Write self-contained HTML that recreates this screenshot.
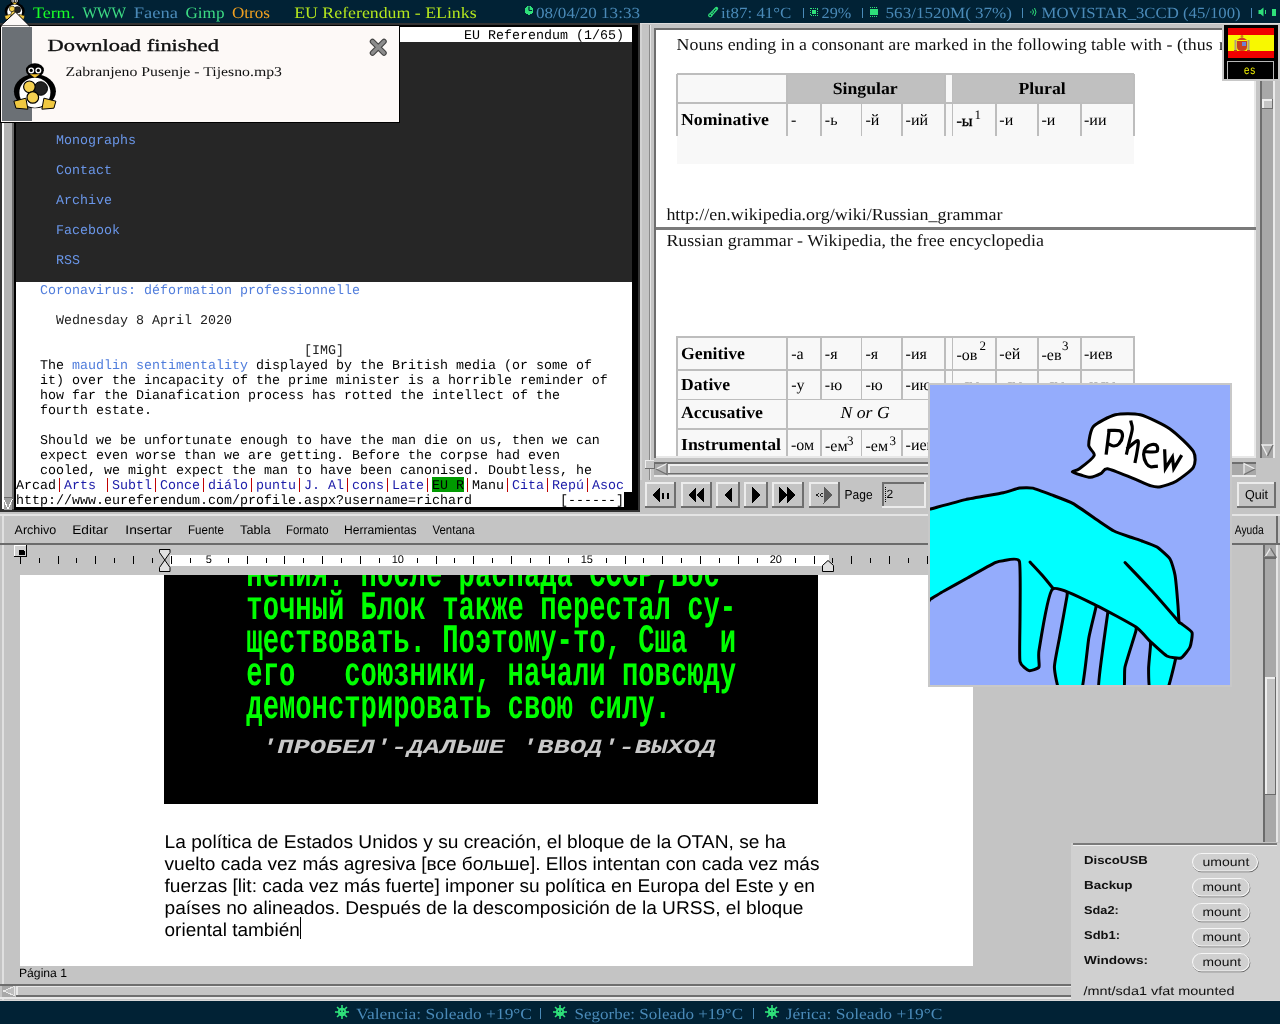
<!DOCTYPE html>
<html><head><meta charset="utf-8"><title>Desktop</title>
<style>
html,body{margin:0;padding:0;width:1280px;height:1024px;overflow:hidden;background:#c4c4c4;}
svg{position:absolute;left:0;top:0;display:block;will-change:transform;}
text{white-space:pre;}
</style></head><body>
<svg width="1280" height="1024" viewBox="0 0 1280 1024" shape-rendering="crispEdges" text-rendering="geometricPrecision">
<rect x="0" y="0" width="1280" height="1024" fill="#c4c4c4" />
<rect x="0" y="510" width="1280" height="490" fill="#c4c4c4" />
<rect x="2" y="514" width="2" height="486" fill="#e0e0e0" />
<rect x="0" y="543" width="1280" height="1.5" fill="#6b6b6b" />
<text x="14.6" y="534" font-family="Liberation Sans" font-size="12.5" fill="#000" textLength="41.7" lengthAdjust="spacingAndGlyphs" >Archivo</text>
<text x="72.2" y="534" font-family="Liberation Sans" font-size="12.5" fill="#000" textLength="35.8" lengthAdjust="spacingAndGlyphs" >Editar</text>
<text x="125.3" y="534" font-family="Liberation Sans" font-size="12.5" fill="#000" textLength="46.8" lengthAdjust="spacingAndGlyphs" >Insertar</text>
<text x="188" y="534" font-family="Liberation Sans" font-size="12.5" fill="#000" textLength="36" lengthAdjust="spacingAndGlyphs" >Fuente</text>
<text x="240" y="534" font-family="Liberation Sans" font-size="12.5" fill="#000" textLength="30.5" lengthAdjust="spacingAndGlyphs" >Tabla</text>
<text x="286" y="534" font-family="Liberation Sans" font-size="12.5" fill="#000" textLength="42.5" lengthAdjust="spacingAndGlyphs" >Formato</text>
<text x="344" y="534" font-family="Liberation Sans" font-size="12.5" fill="#000" textLength="72.5" lengthAdjust="spacingAndGlyphs" >Herramientas</text>
<text x="432.5" y="534" font-family="Liberation Sans" font-size="12.5" fill="#000" textLength="42.0" lengthAdjust="spacingAndGlyphs" >Ventana</text>
<rect x="1232" y="514" width="46" height="31" fill="#c4c4c4" />
<rect x="1232" y="514" width="46" height="1.6" fill="#e6e6e6" />
<rect x="1276" y="514" width="2" height="31" fill="#6b6b6b" />
<rect x="1232" y="543" width="46" height="2" fill="#6b6b6b" />
<text x="1234.8" y="534" font-family="Liberation Sans" font-size="12.5" fill="#000" textLength="29" lengthAdjust="spacingAndGlyphs" >Ayuda</text>
<rect x="1263" y="545" width="2" height="297" fill="#6b6b6b" />
<rect x="1265" y="545" width="11" height="297" fill="#a8a8a8" />
<rect x="1276" y="545" width="2" height="297" fill="#e6e6e6" />
<g shape-rendering="auto"><polygon points="1270.5,548 1265,557 1276,557" fill="#b4b4b4"/><path d="M1265,557 L1270.5,548" stroke="#eeeeee" stroke-width="1.3"/><path d="M1270.5,548 L1276,557 L1265,557" stroke="#6e6e6e" stroke-width="1.3" fill="none"/></g>
<rect x="1265" y="557" width="11" height="1.5" fill="#6b6b6b" />
<rect x="1265" y="677" width="11" height="118" fill="#c4c4c4" />
<rect x="1265" y="677" width="11" height="1.5" fill="#eeeeee" />
<rect x="1265" y="677" width="1.5" height="118" fill="#eeeeee" />
<rect x="1265" y="793.5" width="11" height="1.5" fill="#6b6b6b" />
<rect x="1274.5" y="677" width="1.5" height="118" fill="#6b6b6b" />
<rect x="170" y="555" width="659" height="11" fill="#ffffff" />
<rect x="19.5" y="556.3" width="1.2" height="7.4" fill="#000" />
<rect x="38.5" y="557.5" width="1.2" height="5" fill="#000" />
<rect x="57.5" y="556.3" width="1.2" height="7.4" fill="#000" />
<rect x="75.5" y="557.5" width="1.2" height="5" fill="#000" />
<rect x="94.5" y="556.3" width="1.2" height="7.4" fill="#000" />
<rect x="113.5" y="557.5" width="1.2" height="5" fill="#000" />
<rect x="132.5" y="556.3" width="1.2" height="7.4" fill="#000" />
<rect x="151.5" y="557.5" width="1.2" height="5" fill="#000" />
<rect x="170.5" y="556.3" width="1.2" height="7.4" fill="#000" />
<rect x="189.5" y="557.5" width="1.2" height="5" fill="#000" />
<text x="208.8" y="562.6" font-family="Liberation Sans" font-size="11" fill="#000" text-anchor="middle" >5</text>
<rect x="227.5" y="557.5" width="1.2" height="5" fill="#000" />
<rect x="246.5" y="556.3" width="1.2" height="7.4" fill="#000" />
<rect x="265.5" y="557.5" width="1.2" height="5" fill="#000" />
<rect x="283.5" y="556.3" width="1.2" height="7.4" fill="#000" />
<rect x="302.5" y="557.5" width="1.2" height="5" fill="#000" />
<rect x="321.5" y="556.3" width="1.2" height="7.4" fill="#000" />
<rect x="340.5" y="557.5" width="1.2" height="5" fill="#000" />
<rect x="359.5" y="556.3" width="1.2" height="7.4" fill="#000" />
<rect x="378.5" y="557.5" width="1.2" height="5" fill="#000" />
<text x="397.8" y="562.6" font-family="Liberation Sans" font-size="11" fill="#000" text-anchor="middle" >10</text>
<rect x="416.5" y="557.5" width="1.2" height="5" fill="#000" />
<rect x="435.5" y="556.3" width="1.2" height="7.4" fill="#000" />
<rect x="453.5" y="557.5" width="1.2" height="5" fill="#000" />
<rect x="472.5" y="556.3" width="1.2" height="7.4" fill="#000" />
<rect x="491.5" y="557.5" width="1.2" height="5" fill="#000" />
<rect x="510.5" y="556.3" width="1.2" height="7.4" fill="#000" />
<rect x="529.5" y="557.5" width="1.2" height="5" fill="#000" />
<rect x="548.5" y="556.3" width="1.2" height="7.4" fill="#000" />
<rect x="567.5" y="557.5" width="1.2" height="5" fill="#000" />
<text x="586.8" y="562.6" font-family="Liberation Sans" font-size="11" fill="#000" text-anchor="middle" >15</text>
<rect x="605.5" y="557.5" width="1.2" height="5" fill="#000" />
<rect x="624.5" y="556.3" width="1.2" height="7.4" fill="#000" />
<rect x="642.5" y="557.5" width="1.2" height="5" fill="#000" />
<rect x="661.5" y="556.3" width="1.2" height="7.4" fill="#000" />
<rect x="680.5" y="557.5" width="1.2" height="5" fill="#000" />
<rect x="699.5" y="556.3" width="1.2" height="7.4" fill="#000" />
<rect x="718.5" y="557.5" width="1.2" height="5" fill="#000" />
<rect x="737.5" y="556.3" width="1.2" height="7.4" fill="#000" />
<rect x="756.5" y="557.5" width="1.2" height="5" fill="#000" />
<text x="775.8" y="562.6" font-family="Liberation Sans" font-size="11" fill="#000" text-anchor="middle" >20</text>
<rect x="794.5" y="557.5" width="1.2" height="5" fill="#000" />
<rect x="813.5" y="556.3" width="1.2" height="7.4" fill="#000" />
<rect x="831.5" y="557.5" width="1.2" height="5" fill="#000" />
<rect x="850.5" y="556.3" width="1.2" height="7.4" fill="#000" />
<rect x="869.5" y="557.5" width="1.2" height="5" fill="#000" />
<rect x="888.5" y="556.3" width="1.2" height="7.4" fill="#000" />
<rect x="907.5" y="557.5" width="1.2" height="5" fill="#000" />
<rect x="926.5" y="556.3" width="1.2" height="7.4" fill="#000" />
<rect x="14.3" y="545.2" width="12.3" height="11.5" fill="#d0d0d0" />
<rect x="14.3" y="545.2" width="12.3" height="1" fill="#ffffff" />
<rect x="14.3" y="545.2" width="1" height="11.5" fill="#ffffff" />
<rect x="14.3" y="555.7" width="12.3" height="1" fill="#000" />
<rect x="25.6" y="545.2" width="1" height="11.5" fill="#000" />
<rect x="18.5" y="549.5" width="5" height="5" fill="#000" />
<rect x="22" y="551" width="2.5" height="3.5" fill="#000" />
<path d="M159.5,549.5 h10.5 v3 l-5.25,7.5 l5.25,7.5 v4 h-10.5 v-4 l5.25,-7.5 l-5.25,-7.5 z" fill="#e0e0e0" stroke="#000" stroke-width="1" shape-rendering="auto"/>
<path d="M822.5,571.5 v-6 l5.5,-5 l5.5,5 v6 z" fill="#e0e0e0" stroke="#000" stroke-width="1" shape-rendering="auto"/>
<rect x="20" y="575" width="953" height="391" fill="#ffffff" />
<rect x="164" y="575" width="654" height="229" fill="#000000" />
<svg x="164" y="575" width="654" height="229" overflow="hidden">
<text transform="translate(82.3,11.0) scale(1,1.62)" font-family="Liberation Mono" font-weight="bold" font-size="25" fill="#00ff00" textLength="473.6" lengthAdjust="spacingAndGlyphs">нения. после распада СССР,Вос</text>
<text transform="translate(82.3,44.1) scale(1,1.62)" font-family="Liberation Mono" font-weight="bold" font-size="25" fill="#00ff00" textLength="489.9" lengthAdjust="spacingAndGlyphs">точный Блок также перестал су-</text>
<text transform="translate(82.3,77.2) scale(1,1.62)" font-family="Liberation Mono" font-weight="bold" font-size="25" fill="#00ff00" textLength="489.9" lengthAdjust="spacingAndGlyphs">ществовать. Поэтому-то, Сша  и</text>
<text transform="translate(82.3,110.30000000000001) scale(1,1.62)" font-family="Liberation Mono" font-weight="bold" font-size="25" fill="#00ff00" textLength="489.9" lengthAdjust="spacingAndGlyphs">его   союзники, начали повсюду</text>
<text transform="translate(82.3,143.4) scale(1,1.62)" font-family="Liberation Mono" font-weight="bold" font-size="25" fill="#00ff00" textLength="424.6" lengthAdjust="spacingAndGlyphs">демонстрировать свою силу.</text>
<text transform="translate(97,178.3)" font-family="Liberation Mono" font-weight="bold" font-style="italic" font-size="20" fill="#c8c8c8" textLength="455" lengthAdjust="spacingAndGlyphs">&#x27;ПРОБЕЛ&#x27;-ДАЛЬШЕ &#x27;ВВОД&#x27;-ВЫХОД</text>
</svg>
<text x="164.5" y="847.9" font-family="Liberation Sans" font-size="18.5" fill="#000" textLength="621.5" lengthAdjust="spacingAndGlyphs" >La política de Estados Unidos y su creación, el bloque de la OTAN, se ha</text>
<text x="164.5" y="869.9" font-family="Liberation Sans" font-size="18.5" fill="#000" textLength="655.0" lengthAdjust="spacingAndGlyphs" >vuelto cada vez más agresiva [все больше]. Ellos intentan con cada vez más</text>
<text x="164.5" y="891.9" font-family="Liberation Sans" font-size="18.5" fill="#000" textLength="650.5" lengthAdjust="spacingAndGlyphs" >fuerzas [lit: cada vez más fuerte] imponer su política en Europa del Este y en</text>
<text x="164.5" y="913.9" font-family="Liberation Sans" font-size="18.5" fill="#000" textLength="639.0" lengthAdjust="spacingAndGlyphs" >países no alineados. Después de la descomposición de la URSS, el bloque</text>
<text x="164.5" y="935.9" font-family="Liberation Sans" font-size="18.5" fill="#000" textLength="135.3" lengthAdjust="spacingAndGlyphs" >oriental también</text>
<rect x="300" y="917" width="1" height="22" fill="#000" />
<text x="19" y="977" font-family="Liberation Sans" font-size="12" fill="#000" textLength="48" lengthAdjust="spacingAndGlyphs" >Página 1</text>
<rect x="0" y="984" width="1071" height="1.6" fill="#6e6e6e" />
<rect x="2" y="985.6" width="13" height="11.4" fill="#a8a8a8" />
<polygon points="3.5,991 14,986.5 14,995.5" fill="#bdbdbd" stroke="#e8e8e8" stroke-width="1"/>
<rect x="16" y="985.6" width="1075" height="11.4" fill="#c4c4c4" />
<rect x="16" y="985.6" width="1075" height="1.6" fill="#e8e8e8" />
<rect x="16" y="985.6" width="1.6" height="11.4" fill="#e8e8e8" />
<rect x="16" y="995.4" width="1075" height="1.6" fill="#6e6e6e" />
<rect x="1089.4" y="985.6" width="1.6" height="11.4" fill="#6e6e6e" />
<rect x="0" y="997" width="1071" height="2" fill="#e8e8e8" />
<rect x="0" y="23" width="640" height="489" fill="#333333" />
<rect x="2" y="26" width="2" height="483" fill="#ffffff" />
<rect x="4" y="26" width="8" height="483" fill="#b4b4b4" />
<rect x="12" y="26" width="2" height="483" fill="#6b6b6b" />
<rect x="4" y="496.5" width="8" height="1" fill="#6b6b6b" />
<rect x="4" y="497.5" width="8" height="12" fill="#a0a0a0" />
<polyline points="3.5,499 8,509 12.5,499" fill="none" stroke="#ffffff" stroke-width="1"/>
<rect x="14" y="25" width="624" height="485" fill="#000000" />
<rect x="16" y="27" width="616" height="480" fill="#262626" />
<rect x="16" y="27" width="616" height="15" fill="#ffffff" />
<rect x="16" y="282" width="616" height="225" fill="#ffffff" />
<text x="464" y="39" font-family="Liberation Mono" font-size="13.333" fill="#000" >EU Referendum (1/65)</text>
<text x="56" y="144" font-family="Liberation Mono" font-size="13.333" fill="#6a96e8" >Monographs</text>
<text x="56" y="174" font-family="Liberation Mono" font-size="13.333" fill="#6a96e8" >Contact</text>
<text x="56" y="204" font-family="Liberation Mono" font-size="13.333" fill="#6a96e8" >Archive</text>
<text x="56" y="234" font-family="Liberation Mono" font-size="13.333" fill="#6a96e8" >Facebook</text>
<text x="56" y="264" font-family="Liberation Mono" font-size="13.333" fill="#6a96e8" >RSS</text>
<text x="40" y="294" font-family="Liberation Mono" font-size="13.333" fill="#507ddc" >Coronavirus: déformation professionnelle</text>
<text x="56" y="324" font-family="Liberation Mono" font-size="13.333" fill="#202020" >Wednesday 8 April 2020</text>
<text x="304" y="354" font-family="Liberation Mono" font-size="13.333" fill="#202020" >[IMG]</text>
<text x="40" y="369" font-family="Liberation Mono" font-size="13.333" fill="#000" >The</text>
<text x="72" y="369" font-family="Liberation Mono" font-size="13.333" fill="#507ddc" >maudlin sentimentality</text>
<text x="256" y="369" font-family="Liberation Mono" font-size="13.333" fill="#000" >displayed by the British media (or some of</text>
<text x="40" y="384" font-family="Liberation Mono" font-size="13.333" fill="#000" >it) over the incapacity of the prime minister is a horrible reminder of</text>
<text x="40" y="399" font-family="Liberation Mono" font-size="13.333" fill="#000" >how far the Dianafication process has rotted the intellect of the</text>
<text x="40" y="414" font-family="Liberation Mono" font-size="13.333" fill="#000" >fourth estate.</text>
<text x="40" y="444" font-family="Liberation Mono" font-size="13.333" fill="#000" >Should we be unfortunate enough to have the man die on us, then we can</text>
<text x="40" y="459" font-family="Liberation Mono" font-size="13.333" fill="#000" >expect even worse than we are getting. Before the corpse had even</text>
<text x="40" y="474" font-family="Liberation Mono" font-size="13.333" fill="#000" >cooled, we might expect the man to have been canonised. Doubtless, he</text>
<text x="16" y="489" font-family="Liberation Mono" font-size="13.333" fill="#000" >Arcad</text>
<rect x="58.5" y="477.5" width="1.8" height="14.5" fill="#c00000" />
<text x="64" y="489" font-family="Liberation Mono" font-size="13.333" fill="#1a1aa8" >Arts </text>
<rect x="106.5" y="477.5" width="1.8" height="14.5" fill="#c00000" />
<text x="112" y="489" font-family="Liberation Mono" font-size="13.333" fill="#1a1aa8" >Subtl</text>
<rect x="154.5" y="477.5" width="1.8" height="14.5" fill="#c00000" />
<text x="160" y="489" font-family="Liberation Mono" font-size="13.333" fill="#1a1aa8" >Conce</text>
<rect x="202.5" y="477.5" width="1.8" height="14.5" fill="#c00000" />
<text x="208" y="489" font-family="Liberation Mono" font-size="13.333" fill="#1a1aa8" >diálo</text>
<rect x="250.5" y="477.5" width="1.8" height="14.5" fill="#c00000" />
<text x="256" y="489" font-family="Liberation Mono" font-size="13.333" fill="#1a1aa8" >puntu</text>
<rect x="298.5" y="477.5" width="1.8" height="14.5" fill="#c00000" />
<text x="304" y="489" font-family="Liberation Mono" font-size="13.333" fill="#1a1aa8" >J. Al</text>
<rect x="346.5" y="477.5" width="1.8" height="14.5" fill="#c00000" />
<text x="352" y="489" font-family="Liberation Mono" font-size="13.333" fill="#1a1aa8" >cons</text>
<rect x="386.5" y="477.5" width="1.8" height="14.5" fill="#c00000" />
<text x="392" y="489" font-family="Liberation Mono" font-size="13.333" fill="#1a1aa8" >Late</text>
<rect x="426.5" y="477.5" width="1.8" height="14.5" fill="#c00000" />
<rect x="432" y="477" width="32" height="15" fill="#009a00" />
<text x="432" y="489" font-family="Liberation Mono" font-size="13.333" fill="#000" >EU R</text>
<rect x="466.5" y="477.5" width="1.8" height="14.5" fill="#c00000" />
<text x="472" y="489" font-family="Liberation Mono" font-size="13.333" fill="#000" >Manu</text>
<rect x="506.5" y="477.5" width="1.8" height="14.5" fill="#c00000" />
<text x="512" y="489" font-family="Liberation Mono" font-size="13.333" fill="#1a1aa8" >Cita</text>
<rect x="546.5" y="477.5" width="1.8" height="14.5" fill="#c00000" />
<text x="552" y="489" font-family="Liberation Mono" font-size="13.333" fill="#1a1aa8" >Repú</text>
<rect x="586.5" y="477.5" width="1.8" height="14.5" fill="#c00000" />
<text x="592" y="489" font-family="Liberation Mono" font-size="13.333" fill="#1a1aa8" >Asoc</text>
<rect x="624" y="492" width="8" height="15" fill="#000" />
<text x="16" y="504" font-family="Liberation Mono" font-size="13.333" fill="#000" >http://www.eureferendum.com/profile.aspx?username=richard</text>
<text x="560" y="504" font-family="Liberation Mono" font-size="13.333" fill="#000" >[------]</text>
<rect x="640" y="23" width="640" height="489" fill="#c4c4c4" />
<rect x="640" y="23" width="640" height="1" fill="#dcdcdc" />
<rect x="640" y="24" width="2" height="456" fill="#d2d2d2" />
<rect x="649" y="25" width="1" height="455" fill="#8a8a8a" />
<rect x="650" y="25" width="1" height="455" fill="#e6e6e6" />
<rect x="654" y="28" width="602" height="430" fill="#6e6e6e" />
<rect x="656" y="30" width="600" height="426" fill="#ffffff" />
<rect x="656" y="456" width="600" height="1.5" fill="#e8e8e8" />
<rect x="1254" y="30" width="2" height="427" fill="#e8e8e8" />
<rect x="1260" y="30" width="2" height="428" fill="#6e6e6e" />
<rect x="1262" y="30" width="11" height="428" fill="#a8a8a8" />
<rect x="1273" y="30" width="2" height="428" fill="#eaeaea" />
<rect x="1262" y="99" width="11" height="10" fill="#c4c4c4" />
<rect x="1262" y="99" width="11" height="1.5" fill="#eeeeee" />
<rect x="1262" y="99" width="1.5" height="10" fill="#eeeeee" />
<rect x="1262" y="107.5" width="11" height="1.5" fill="#6e6e6e" />
<rect x="1271.5" y="99" width="1.5" height="10" fill="#6e6e6e" />
<g shape-rendering="auto"><polygon points="1262,445 1273,445 1267.5,456" fill="#b4b4b4"/><path d="M1267.5,456 L1262,445 L1273,445" stroke="#eeeeee" stroke-width="1.3" fill="none"/><path d="M1273,445 L1267.5,456" stroke="#6e6e6e" stroke-width="1.3"/></g>
<rect x="654" y="462" width="602" height="1.5" fill="#6e6e6e" />
<rect x="654" y="463.5" width="602" height="11" fill="#a8a8a8" />
<rect x="654" y="474.5" width="602" height="2" fill="#eaeaea" />
<rect x="645" y="460" width="10" height="9" fill="#c4c4c4" />
<rect x="645" y="460" width="10" height="1.2" fill="#eeeeee" />
<rect x="645" y="460" width="1.2" height="9" fill="#eeeeee" />
<rect x="645" y="467.8" width="10" height="1.2" fill="#6e6e6e" />
<rect x="653.8" y="460" width="1.2" height="9" fill="#6e6e6e" />
<g shape-rendering="auto"><polygon points="656,469 667,463.5 667,474.5" fill="#b4b4b4"/><path d="M656,469 L667,463.5" stroke="#eeeeee" stroke-width="1.3"/><path d="M656,469 L667,474.5 L667,463.5" stroke="#6e6e6e" stroke-width="1.3" fill="none"/></g>
<rect x="668" y="464" width="560" height="10" fill="#c4c4c4" />
<rect x="668" y="464" width="560" height="1.5" fill="#eeeeee" />
<rect x="668" y="464" width="1.5" height="10" fill="#eeeeee" />
<rect x="668" y="472.5" width="560" height="1.5" fill="#6e6e6e" />
<rect x="1226.5" y="464" width="1.5" height="10" fill="#6e6e6e" />
<g shape-rendering="auto"><polygon points="1255,469 1244,463.5 1244,474.5" fill="#b4b4b4"/><path d="M1244,474.5 L1244,463.5 L1255,469" stroke="#eeeeee" stroke-width="1.3" fill="none"/><path d="M1255,469 L1244,474.5" stroke="#6e6e6e" stroke-width="1.3"/></g>
<rect x="644.5" y="482" width="31.5" height="26" fill="#c4c4c4" />
<rect x="644.5" y="482" width="31.5" height="2" fill="#ececec" />
<rect x="644.5" y="482" width="2" height="26" fill="#ececec" />
<rect x="644.5" y="506" width="31.5" height="2" fill="#6e6e6e" />
<rect x="674.0" y="482" width="2" height="26" fill="#6e6e6e" />
<rect x="680.5" y="482" width="31.0" height="26" fill="#c4c4c4" />
<rect x="680.5" y="482" width="31.0" height="2" fill="#ececec" />
<rect x="680.5" y="482" width="2" height="26" fill="#ececec" />
<rect x="680.5" y="506" width="31.0" height="2" fill="#6e6e6e" />
<rect x="709.5" y="482" width="2" height="26" fill="#6e6e6e" />
<rect x="716" y="482" width="24" height="26" fill="#c4c4c4" />
<rect x="716" y="482" width="24" height="2" fill="#ececec" />
<rect x="716" y="482" width="2" height="26" fill="#ececec" />
<rect x="716" y="506" width="24" height="2" fill="#6e6e6e" />
<rect x="738" y="482" width="2" height="26" fill="#6e6e6e" />
<rect x="744" y="482" width="24" height="26" fill="#c4c4c4" />
<rect x="744" y="482" width="24" height="2" fill="#ececec" />
<rect x="744" y="482" width="2" height="26" fill="#ececec" />
<rect x="744" y="506" width="24" height="2" fill="#6e6e6e" />
<rect x="766" y="482" width="2" height="26" fill="#6e6e6e" />
<rect x="772" y="482" width="31.5" height="26" fill="#c4c4c4" />
<rect x="772" y="482" width="31.5" height="2" fill="#ececec" />
<rect x="772" y="482" width="2" height="26" fill="#ececec" />
<rect x="772" y="506" width="31.5" height="2" fill="#6e6e6e" />
<rect x="801.5" y="482" width="2" height="26" fill="#6e6e6e" />
<rect x="808.5" y="482" width="31.5" height="26" fill="#c4c4c4" />
<rect x="808.5" y="482" width="31.5" height="2" fill="#ececec" />
<rect x="808.5" y="482" width="2" height="26" fill="#ececec" />
<rect x="808.5" y="506" width="31.5" height="2" fill="#6e6e6e" />
<rect x="838.0" y="482" width="2" height="26" fill="#6e6e6e" />
<polygon points="652,495 660,487 660,503" fill="#000"/>
<rect x="662" y="492.5" width="2.2" height="6" fill="#000" />
<rect x="666.5" y="492.5" width="2.2" height="6" fill="#000" />
<polygon points="688,495 696,487 696,503" fill="#000"/><polygon points="696,495 704,487 704,503" fill="#000"/>
<polygon points="724,495 732,487 732,503" fill="#000"/>
<polygon points="760,495 752,487 752,503" fill="#000"/>
<polygon points="787,495 779,487 779,503" fill="#000"/><polygon points="795,495 787,487 787,503" fill="#000"/>
<polygon points="832.5,495 823.5,486.5 823.5,503.5" fill="#5a5a5a"/>
<g fill="#222"><rect x="816" y="494" width="1.5" height="1.5"/><rect x="817.5" y="492.5" width="1.5" height="1.5"/><rect x="817.5" y="495.5" width="1.5" height="1.5"/><rect x="819.5" y="494" width="1.5" height="1.5"/><rect x="821" y="492.5" width="1.5" height="1.5"/><rect x="821" y="495.5" width="1.5" height="1.5"/></g>
<text x="844.6" y="499" font-family="Liberation Sans" font-size="13" fill="#000" textLength="28" lengthAdjust="spacingAndGlyphs" >Page</text>
<rect x="881.5" y="482" width="44.5" height="26" fill="#c4c4c4" />
<rect x="881.5" y="482" width="44.5" height="2" fill="#6e6e6e" />
<rect x="881.5" y="482" width="2" height="26" fill="#6e6e6e" />
<rect x="881.5" y="506" width="44.5" height="2" fill="#ececec" />
<rect x="924.0" y="482" width="2" height="26" fill="#ececec" />
<text x="886.5" y="497.5" font-family="Liberation Sans" font-size="12" fill="#000" >2</text>
<line x1="885" y1="487" x2="885" y2="503" stroke="#000" stroke-width="1" stroke-dasharray="1,1"/>
<rect x="1237" y="482" width="39" height="26" fill="#c4c4c4" />
<rect x="1237" y="482" width="39" height="2" fill="#ececec" />
<rect x="1237" y="482" width="2" height="26" fill="#ececec" />
<rect x="1237" y="506" width="39" height="2" fill="#6e6e6e" />
<rect x="1274" y="482" width="2" height="26" fill="#6e6e6e" />
<text x="1245" y="499" font-family="Liberation Sans" font-size="13" fill="#000" textLength="23" lengthAdjust="spacingAndGlyphs" >Quit</text>
<rect x="0" y="514" width="1280" height="2" fill="#e4e4e4" />
<text x="676.6" y="49.8" font-family="Liberation Serif" font-size="17" fill="#111" textLength="536" lengthAdjust="spacingAndGlyphs" >Nouns ending in a consonant are marked in the following table with - (thus</text>
<text x="1219" y="49.8" font-family="Liberation Serif" font-size="17" fill="#111" >no</text>
<text x="666.4" y="220" font-family="Liberation Serif" font-size="17" fill="#111" textLength="336" lengthAdjust="spacingAndGlyphs" >http://en.wikipedia.org/wiki/Russian_grammar</text>
<rect x="656" y="227" width="600" height="3" fill="#7a7a7a" />
<text x="666.4" y="245.8" font-family="Liberation Serif" font-size="17" fill="#111" textLength="377.6" lengthAdjust="spacingAndGlyphs" >Russian grammar - Wikipedia, the free encyclopedia</text>
<rect x="676.5" y="73.5" width="457" height="90" fill="#f8f8f8" />
<rect x="786.5" y="73.2" width="158" height="30" fill="#c0c0c0" />
<rect x="952" y="73.2" width="181.5" height="30" fill="#c0c0c0" />
<rect x="676.5" y="73.1" width="457.5" height="1.7" fill="#bdbdbd" />
<rect x="676.5" y="102.1" width="457.5" height="1.7" fill="#bdbdbd" />
<rect x="676.0" y="73.5" width="1.7" height="29.5" fill="#bdbdbd" />
<rect x="786.0" y="73.5" width="1.7" height="29.5" fill="#bdbdbd" />
<rect x="944.0" y="73.5" width="1.7" height="29.5" fill="#bdbdbd" />
<rect x="951.5" y="73.5" width="1.7" height="29.5" fill="#bdbdbd" />
<rect x="1133.0" y="73.5" width="1.7" height="29.5" fill="#bdbdbd" />
<rect x="676.0" y="103" width="1.7" height="33" fill="#bdbdbd" />
<rect x="786.0" y="103" width="1.7" height="33" fill="#bdbdbd" />
<rect x="820.0" y="103" width="1.7" height="33" fill="#bdbdbd" />
<rect x="860.5" y="103" width="1.7" height="33" fill="#bdbdbd" />
<rect x="901.0" y="103" width="1.7" height="33" fill="#bdbdbd" />
<rect x="944.0" y="103" width="1.7" height="33" fill="#bdbdbd" />
<rect x="951.5" y="103" width="1.7" height="33" fill="#bdbdbd" />
<rect x="995.0" y="103" width="1.7" height="33" fill="#bdbdbd" />
<rect x="1037.0" y="103" width="1.7" height="33" fill="#bdbdbd" />
<rect x="1080.0" y="103" width="1.7" height="33" fill="#bdbdbd" />
<rect x="1133.0" y="103" width="1.7" height="33" fill="#bdbdbd" />
<text x="681" y="124.9" font-family="Liberation Serif" font-size="17" fill="#000" textLength="88" lengthAdjust="spacingAndGlyphs" font-weight="bold" >Nominative</text>
<text x="832.7" y="94.4" font-family="Liberation Serif" font-size="17" fill="#000" textLength="65" lengthAdjust="spacingAndGlyphs" font-weight="bold" >Singular</text>
<text x="1018.5" y="94.4" font-family="Liberation Serif" font-size="17" fill="#000" textLength="47.3" lengthAdjust="spacingAndGlyphs" font-weight="bold" >Plural</text>
<text x="791" y="125" font-family="Liberation Serif" font-size="16" fill="#000" >-</text>
<text x="824.8" y="125" font-family="Liberation Serif" font-size="16" fill="#000" >-ь</text>
<text x="865.5" y="125" font-family="Liberation Serif" font-size="16" fill="#000" >-й</text>
<text x="905.6" y="125" font-family="Liberation Serif" font-size="16" fill="#000" >-ий</text>
<text x="999.3" y="125" font-family="Liberation Serif" font-size="16" fill="#000" >-и</text>
<text x="1041.5" y="125" font-family="Liberation Serif" font-size="16" fill="#000" >-и</text>
<text x="1084" y="125" font-family="Liberation Serif" font-size="16" fill="#000" >-ии</text>
<text x="956.4" y="125.5" font-family="Liberation Serif" font-size="16" fill="#000" stroke="#000" stroke-width="0.4">-ы</text>
<text x="974.5" y="118.6" font-family="Liberation Serif" font-size="13" fill="#000" >1</text>
<rect x="676.5" y="336" width="457" height="120" fill="#f8f8f8" />
<rect x="676.5" y="335.9" width="457.5" height="1.7" fill="#bdbdbd" />
<rect x="676.5" y="369.1" width="457.5" height="1.7" fill="#bdbdbd" />
<rect x="676.5" y="398.5" width="457.5" height="1.7" fill="#bdbdbd" />
<rect x="676.5" y="427.8" width="457.5" height="1.7" fill="#bdbdbd" />
<rect x="676.0" y="336" width="1.7" height="63" fill="#bdbdbd" />
<rect x="786.0" y="336" width="1.7" height="63" fill="#bdbdbd" />
<rect x="820.0" y="336" width="1.7" height="63" fill="#bdbdbd" />
<rect x="860.5" y="336" width="1.7" height="63" fill="#bdbdbd" />
<rect x="901.0" y="336" width="1.7" height="63" fill="#bdbdbd" />
<rect x="944.0" y="336" width="1.7" height="63" fill="#bdbdbd" />
<rect x="951.5" y="336" width="1.7" height="63" fill="#bdbdbd" />
<rect x="995.0" y="336" width="1.7" height="63" fill="#bdbdbd" />
<rect x="1037.0" y="336" width="1.7" height="63" fill="#bdbdbd" />
<rect x="1080.0" y="336" width="1.7" height="63" fill="#bdbdbd" />
<rect x="1133.0" y="336" width="1.7" height="63" fill="#bdbdbd" />
<rect x="676.0" y="399" width="1.7" height="29.30000000000001" fill="#bdbdbd" />
<rect x="786.0" y="399" width="1.7" height="29.30000000000001" fill="#bdbdbd" />
<rect x="944.0" y="399" width="1.7" height="29.30000000000001" fill="#bdbdbd" />
<rect x="951.5" y="399" width="1.7" height="29.30000000000001" fill="#bdbdbd" />
<rect x="995.0" y="399" width="1.7" height="29.30000000000001" fill="#bdbdbd" />
<rect x="1037.0" y="399" width="1.7" height="29.30000000000001" fill="#bdbdbd" />
<rect x="1080.0" y="399" width="1.7" height="29.30000000000001" fill="#bdbdbd" />
<rect x="1133.0" y="399" width="1.7" height="29.30000000000001" fill="#bdbdbd" />
<rect x="676.0" y="428.3" width="1.7" height="27.69999999999999" fill="#bdbdbd" />
<rect x="786.0" y="428.3" width="1.7" height="27.69999999999999" fill="#bdbdbd" />
<rect x="820.0" y="428.3" width="1.7" height="27.69999999999999" fill="#bdbdbd" />
<rect x="860.5" y="428.3" width="1.7" height="27.69999999999999" fill="#bdbdbd" />
<rect x="901.0" y="428.3" width="1.7" height="27.69999999999999" fill="#bdbdbd" />
<rect x="944.0" y="428.3" width="1.7" height="27.69999999999999" fill="#bdbdbd" />
<rect x="951.5" y="428.3" width="1.7" height="27.69999999999999" fill="#bdbdbd" />
<rect x="995.0" y="428.3" width="1.7" height="27.69999999999999" fill="#bdbdbd" />
<rect x="1037.0" y="428.3" width="1.7" height="27.69999999999999" fill="#bdbdbd" />
<rect x="1080.0" y="428.3" width="1.7" height="27.69999999999999" fill="#bdbdbd" />
<rect x="1133.0" y="428.3" width="1.7" height="27.69999999999999" fill="#bdbdbd" />
<text x="681" y="358.7" font-family="Liberation Serif" font-size="17" fill="#000" textLength="64" lengthAdjust="spacingAndGlyphs" font-weight="bold" >Genitive</text>
<text x="681" y="389.6" font-family="Liberation Serif" font-size="17" fill="#000" textLength="49" lengthAdjust="spacingAndGlyphs" font-weight="bold" >Dative</text>
<text x="681" y="418.4" font-family="Liberation Serif" font-size="17" fill="#000" textLength="82" lengthAdjust="spacingAndGlyphs" font-weight="bold" >Accusative</text>
<text x="681" y="450" font-family="Liberation Serif" font-size="17" fill="#000" textLength="100" lengthAdjust="spacingAndGlyphs" font-weight="bold" >Instrumental</text>
<text x="791.2" y="358.7" font-family="Liberation Serif" font-size="16" fill="#000" >-а</text>
<text x="824.8" y="358.7" font-family="Liberation Serif" font-size="16" fill="#000" >-я</text>
<text x="865.5" y="358.7" font-family="Liberation Serif" font-size="16" fill="#000" >-я</text>
<text x="905.6" y="358.7" font-family="Liberation Serif" font-size="16" fill="#000" >-ия</text>
<text x="999.3" y="358.7" font-family="Liberation Serif" font-size="16" fill="#000" >-ей</text>
<text x="1084" y="358.7" font-family="Liberation Serif" font-size="16" fill="#000" >-иев</text>
<text x="956.4" y="360" font-family="Liberation Serif" font-size="16" fill="#000" >-ов</text>
<text x="979.5" y="350" font-family="Liberation Serif" font-size="13" fill="#000" >2</text>
<text x="1041.5" y="360" font-family="Liberation Serif" font-size="16" fill="#000" >-ев</text>
<text x="1062" y="350" font-family="Liberation Serif" font-size="13" fill="#000" >3</text>
<text x="791.2" y="390" font-family="Liberation Serif" font-size="16" fill="#000" >-у</text>
<text x="824.8" y="390" font-family="Liberation Serif" font-size="16" fill="#000" >-ю</text>
<text x="865.5" y="390" font-family="Liberation Serif" font-size="16" fill="#000" >-ю</text>
<text x="905.6" y="390" font-family="Liberation Serif" font-size="16" fill="#000" >-ию</text>
<text x="956.4" y="390" font-family="Liberation Serif" font-size="16" fill="#000" >-ям</text>
<text x="999.3" y="390" font-family="Liberation Serif" font-size="16" fill="#000" >-ям</text>
<text x="1041.5" y="390" font-family="Liberation Serif" font-size="16" fill="#000" >-ям</text>
<text x="1084" y="390" font-family="Liberation Serif" font-size="16" fill="#000" >-иям</text>
<text x="840.5" y="418.4" font-family="Liberation Serif" font-size="17" fill="#000" textLength="49.2" lengthAdjust="spacingAndGlyphs" font-style="italic" >N or G</text>
<text x="791" y="450" font-family="Liberation Serif" font-size="16" fill="#000" >-ом</text>
<text x="825" y="451" font-family="Liberation Serif" font-size="16" fill="#000" >-ем</text>
<text x="847" y="445" font-family="Liberation Serif" font-size="13" fill="#000" >3</text>
<text x="865.5" y="451" font-family="Liberation Serif" font-size="16" fill="#000" >-ем</text>
<text x="889.5" y="445" font-family="Liberation Serif" font-size="13" fill="#000" >3</text>
<text x="905.6" y="450" font-family="Liberation Serif" font-size="16" fill="#000" >-ием</text>
<rect x="656" y="456" width="600" height="1.5" fill="#e8e8e8" />
<rect x="654" y="457.5" width="602" height="4.5" fill="#c4c4c4" />
<rect x="0" y="0" width="1280" height="23" fill="#012235" />
<text x="33" y="18" font-family="Liberation Serif" font-size="16" fill="#1aff28" textLength="42" lengthAdjust="spacingAndGlyphs" >Term.</text>
<text x="82.5" y="18" font-family="Liberation Serif" font-size="16" fill="#3ddc84" textLength="43.5" lengthAdjust="spacingAndGlyphs" >WWW</text>
<text x="133.8" y="18" font-family="Liberation Serif" font-size="16" fill="#4a8ab8" textLength="44.2" lengthAdjust="spacingAndGlyphs" >Faena</text>
<text x="185.5" y="18" font-family="Liberation Serif" font-size="16" fill="#3ddc84" textLength="39.0" lengthAdjust="spacingAndGlyphs" >Gimp</text>
<text x="232" y="18" font-family="Liberation Serif" font-size="16" fill="#f0a020" textLength="38" lengthAdjust="spacingAndGlyphs" >Otros</text>
<text x="294.2" y="18" font-family="Liberation Serif" font-size="16" fill="#b4e61e" textLength="182.4" lengthAdjust="spacingAndGlyphs" >EU Referendum - ELinks</text>
<text x="536" y="17.8" font-family="Liberation Serif" font-size="15.5" fill="#4a8ab8" textLength="104" lengthAdjust="spacingAndGlyphs" >08/04/20 13:33</text>
<text x="721.1" y="17.8" font-family="Liberation Serif" font-size="15.5" fill="#4a8ab8" textLength="70.3" lengthAdjust="spacingAndGlyphs" >it87: 41°C</text>
<text x="821.6" y="17.8" font-family="Liberation Serif" font-size="15.5" fill="#4a8ab8" textLength="29.7" lengthAdjust="spacingAndGlyphs" >29%</text>
<text x="885.6" y="17.8" font-family="Liberation Serif" font-size="15.5" fill="#4a8ab8" textLength="126.4" lengthAdjust="spacingAndGlyphs" >563/1520M( 37%)</text>
<text x="1041.6" y="17.8" font-family="Liberation Serif" font-size="15.5" fill="#4a8ab8" textLength="199.0" lengthAdjust="spacingAndGlyphs" >MOVISTAR_3CCD (45/100)</text>
<rect x="803" y="8" width="1" height="9.5" fill="#4a8ab8" />
<rect x="862" y="8" width="1" height="9.5" fill="#4a8ab8" />
<rect x="1022" y="8" width="1" height="9.5" fill="#4a8ab8" />
<rect x="1251" y="8" width="1" height="9.5" fill="#4a8ab8" />
<circle cx="529" cy="10.5" r="4.3" fill="#2fe07a"/><path d="M529,10.5 L529,6.5 M529,10.5 L532,10.5" stroke="#012235" stroke-width="1.2" shape-rendering="auto"/>
<g shape-rendering="auto"><path d="M711,14.5 L716.5,8.5" stroke="#2fe07a" stroke-width="3.4" stroke-linecap="round"/><path d="M711.5,14 L716,9" stroke="#012235" stroke-width="1.2" stroke-dasharray="1.2,0.8"/><circle cx="710.2" cy="15.3" r="2.1" fill="#2fe07a"/><circle cx="710.2" cy="15.3" r="0.9" fill="#012235"/></g>
<rect x="810.5" y="8" width="7" height="7.5" fill="none" stroke="#2fe07a" stroke-width="1" stroke-dasharray="1,1"/><rect x="812" y="9.5" width="4" height="4.5" fill="#2fe07a"/>
<rect x="870" y="8.5" width="7.5" height="6.5" fill="#2fe07a"/><path d="M870,7 h8 M870,16.5 h8" stroke="#2fe07a" stroke-width="1" stroke-dasharray="1,1"/>
<path d="M1030,12 h1.5 M1032.5,9.5 q2,2.5 0,5 M1034.5,8 q3,4 0,8" stroke="#2fe07a" stroke-width="1" fill="none" shape-rendering="auto"/>
<path d="M1258.5,10 h2 l3,-2.5 v9 l-3,-2.5 h-2 z" fill="#2fe07a" shape-rendering="auto"/><path d="M1265,10 q1.2,2 0,4" stroke="#2fe07a" stroke-width="1" fill="none"/>
<rect x="1272" y="9.2" width="4" height="6.6" fill="#2fe07a" />
<rect x="0" y="1000" width="1280" height="24" fill="#012235" />
<rect x="0" y="1000" width="1280" height="1" fill="#d8d8d8" />
<g shape-rendering="auto"><circle cx="342" cy="1012" r="4.2" fill="#2fe07a"/><line x1="342" y1="1012" x2="349.00" y2="1012.00" stroke="#2fe07a" stroke-width="1.6"/><line x1="342" y1="1012" x2="346.95" y2="1016.95" stroke="#2fe07a" stroke-width="1.6"/><line x1="342" y1="1012" x2="342.00" y2="1019.00" stroke="#2fe07a" stroke-width="1.6"/><line x1="342" y1="1012" x2="337.05" y2="1016.95" stroke="#2fe07a" stroke-width="1.6"/><line x1="342" y1="1012" x2="335.00" y2="1012.00" stroke="#2fe07a" stroke-width="1.6"/><line x1="342" y1="1012" x2="337.05" y2="1007.05" stroke="#2fe07a" stroke-width="1.6"/><line x1="342" y1="1012" x2="342.00" y2="1005.00" stroke="#2fe07a" stroke-width="1.6"/><line x1="342" y1="1012" x2="346.95" y2="1007.05" stroke="#2fe07a" stroke-width="1.6"/><circle cx="340.5" cy="1011.2" r="0.7" fill="#012235"/><circle cx="343.5" cy="1011.2" r="0.7" fill="#012235"/></g>
<g shape-rendering="auto"><circle cx="560" cy="1012" r="4.2" fill="#2fe07a"/><line x1="560" y1="1012" x2="567.00" y2="1012.00" stroke="#2fe07a" stroke-width="1.6"/><line x1="560" y1="1012" x2="564.95" y2="1016.95" stroke="#2fe07a" stroke-width="1.6"/><line x1="560" y1="1012" x2="560.00" y2="1019.00" stroke="#2fe07a" stroke-width="1.6"/><line x1="560" y1="1012" x2="555.05" y2="1016.95" stroke="#2fe07a" stroke-width="1.6"/><line x1="560" y1="1012" x2="553.00" y2="1012.00" stroke="#2fe07a" stroke-width="1.6"/><line x1="560" y1="1012" x2="555.05" y2="1007.05" stroke="#2fe07a" stroke-width="1.6"/><line x1="560" y1="1012" x2="560.00" y2="1005.00" stroke="#2fe07a" stroke-width="1.6"/><line x1="560" y1="1012" x2="564.95" y2="1007.05" stroke="#2fe07a" stroke-width="1.6"/><circle cx="558.5" cy="1011.2" r="0.7" fill="#012235"/><circle cx="561.5" cy="1011.2" r="0.7" fill="#012235"/></g>
<g shape-rendering="auto"><circle cx="772" cy="1012" r="4.2" fill="#2fe07a"/><line x1="772" y1="1012" x2="779.00" y2="1012.00" stroke="#2fe07a" stroke-width="1.6"/><line x1="772" y1="1012" x2="776.95" y2="1016.95" stroke="#2fe07a" stroke-width="1.6"/><line x1="772" y1="1012" x2="772.00" y2="1019.00" stroke="#2fe07a" stroke-width="1.6"/><line x1="772" y1="1012" x2="767.05" y2="1016.95" stroke="#2fe07a" stroke-width="1.6"/><line x1="772" y1="1012" x2="765.00" y2="1012.00" stroke="#2fe07a" stroke-width="1.6"/><line x1="772" y1="1012" x2="767.05" y2="1007.05" stroke="#2fe07a" stroke-width="1.6"/><line x1="772" y1="1012" x2="772.00" y2="1005.00" stroke="#2fe07a" stroke-width="1.6"/><line x1="772" y1="1012" x2="776.95" y2="1007.05" stroke="#2fe07a" stroke-width="1.6"/><circle cx="770.5" cy="1011.2" r="0.7" fill="#012235"/><circle cx="773.5" cy="1011.2" r="0.7" fill="#012235"/></g>
<text x="356.3" y="1018.7" font-family="Liberation Serif" font-size="15.5" fill="#4a8ab8" textLength="175.7" lengthAdjust="spacingAndGlyphs" >Valencia: Soleado +19°C</text>
<text x="574.5" y="1018.7" font-family="Liberation Serif" font-size="15.5" fill="#4a8ab8" textLength="168.5" lengthAdjust="spacingAndGlyphs" >Segorbe: Soleado +19°C</text>
<text x="785.8" y="1018.7" font-family="Liberation Serif" font-size="15.5" fill="#4a8ab8" textLength="156.7" lengthAdjust="spacingAndGlyphs" >Jérica: Soleado +19°C</text>
<rect x="540" y="1008" width="1" height="10.5" fill="#4a8ab8" />
<rect x="753" y="1008" width="1" height="10.5" fill="#4a8ab8" />
<g transform="translate(14.7,11) scale(0.48)" shape-rendering="auto"><ellipse cx="0" cy="-21" rx="9" ry="7" fill="#000"/><ellipse cx="0" cy="0" rx="21" ry="17" fill="#000"/><ellipse cx="0" cy="1.5" rx="15.5" ry="15" fill="#fff"/><circle cx="-3.7" cy="-20.8" r="3" fill="#fff"/><circle cx="3.4" cy="-20.8" r="3" fill="#fff"/><circle cx="-3.7" cy="-20.8" r="1.6" fill="#000"/><circle cx="3.4" cy="-20.8" r="1.6" fill="#000"/><path d="M-5,-17 L5,-17 L0,-13.5 Z" fill="#f0c030"/><circle cx="5.8" cy="-2.7" r="6.8" fill="#222" stroke="#000" stroke-width="1"/><circle cx="-5.5" cy="-4.4" r="5.8" fill="#f4d050" stroke="#000" stroke-width="1.2"/><circle cx="-2.1" cy="6.2" r="5.8" fill="#f4d050" stroke="#000" stroke-width="1.2"/><path d="M-21,10 L-9,7 L-7,18 L-19,17 Z" fill="#f0c840" stroke="#000" stroke-width="1" stroke-linejoin="round"/><path d="M21,10 L9,7 L7,18 L19,17 Z" fill="#f0c840" stroke="#000" stroke-width="1" stroke-linejoin="round"/></g>
<rect x="0" y="25" width="400" height="98" fill="#000000" />
<rect x="1" y="26" width="398" height="96" fill="#fdf9f7" />
<rect x="2" y="27" width="30" height="94" fill="#6b7075" />
<polygon points="0.5,26 15.5,12 29.5,26" fill="#fdf9f7" stroke="#000" stroke-width="1" shape-rendering="auto"/>
<rect x="1.5" y="25.5" width="27.5" height="1.6" fill="#fdf9f7" />
<g transform="translate(34.9,91.2) scale(1)" shape-rendering="auto"><ellipse cx="0" cy="-21" rx="9" ry="7" fill="#000"/><ellipse cx="0" cy="0" rx="21" ry="17" fill="#000"/><ellipse cx="0" cy="1.5" rx="15.5" ry="15" fill="#fff"/><circle cx="-3.7" cy="-20.8" r="3" fill="#fff"/><circle cx="3.4" cy="-20.8" r="3" fill="#fff"/><circle cx="-3.7" cy="-20.8" r="1.6" fill="#000"/><circle cx="3.4" cy="-20.8" r="1.6" fill="#000"/><path d="M-5,-17 L5,-17 L0,-13.5 Z" fill="#f0c030"/><circle cx="5.8" cy="-2.7" r="6.8" fill="#222" stroke="#000" stroke-width="1"/><circle cx="-5.5" cy="-4.4" r="5.8" fill="#f4d050" stroke="#000" stroke-width="1.2"/><circle cx="-2.1" cy="6.2" r="5.8" fill="#f4d050" stroke="#000" stroke-width="1.2"/><path d="M-21,10 L-9,7 L-7,18 L-19,17 Z" fill="#f0c840" stroke="#000" stroke-width="1" stroke-linejoin="round"/><path d="M21,10 L9,7 L7,18 L19,17 Z" fill="#f0c840" stroke="#000" stroke-width="1" stroke-linejoin="round"/></g>
<text x="47.6" y="50.8" font-family="Liberation Serif" font-size="17" fill="#111" textLength="171.4" lengthAdjust="spacingAndGlyphs" stroke="#111" stroke-width="0.35">Download finished</text>
<text x="65.5" y="75.9" font-family="Liberation Serif" font-size="13.5" fill="#111" textLength="216.5" lengthAdjust="spacingAndGlyphs" >Zabranjeno Pusenje - Tijesno.mp3</text>
<g shape-rendering="auto"><path d="M372.5,41.5 L384,53 M384,41.5 L372.5,53" stroke="#444" stroke-width="5.5" stroke-linecap="round"/><path d="M372.5,41.5 L384,53 M384,41.5 L372.5,53" stroke="#8c8c8c" stroke-width="3.3" stroke-linecap="round"/></g>
<rect x="928" y="383" width="304" height="304" fill="#c8c8c8" />
<rect x="930" y="385" width="300" height="300" fill="#94acfc" />
<svg x="930" y="385" width="300" height="300" overflow="hidden"><g shape-rendering="auto" stroke="#000" stroke-width="3" stroke-linejoin="round" stroke-linecap="round">
<path d="M137.0,206.0 C137.0,206.4 137.6,207.6 137.0,211.3 C136.4,215.1 130.9,245.1 129.8,251.0 C128.8,256.9 124.4,277.4 124.4,282.0 C124.4,286.6 127.6,304.0 129.8,306.0 C132.0,308.0 148.9,310.4 151.3,306.0 C153.7,301.6 157.6,260.0 158.8,253.0 C160.0,246.0 165.4,225.2 166.0,222.0 C166.6,218.8 166.0,215.6 166.0,215.0 Z" fill="#00ffff"/>
<path d="M177.8,222.0 C177.8,222.5 178.2,224.4 177.8,227.6 C177.4,230.8 174.1,253.5 173.3,260.0 C172.6,266.5 167.1,302.2 168.8,306.0 C170.5,309.8 191.1,308.0 193.3,306.0 C195.5,304.0 193.9,287.0 195.0,282.0 C196.1,277.0 205.1,249.4 206.0,245.7 C206.9,242.0 206.0,238.6 206.0,238.0 Z" fill="#00ffff"/>
<path d="M220.4,255.0 C220.4,255.6 220.6,259.6 220.4,262.0 C220.2,264.4 218.6,280.1 218.6,283.8 C218.6,287.5 218.9,304.1 220.4,306.0 C221.9,307.9 234.7,308.8 236.8,306.0 C238.9,303.2 245.1,276.2 245.8,272.9 C246.5,269.6 245.1,266.6 245.0,266.0 Z" fill="#00ffff"/>
<path d="M-5.0,125.0 C-4.5,117.2 -2.7,124.9 0.7,124.0 C4.1,123.1 29.6,115.9 35.6,114.6 C41.6,113.2 68.8,108.8 73.3,107.8 C77.8,106.8 86.9,103.5 89.4,103.1 C91.9,102.7 100.1,102.5 102.8,103.1 C105.5,103.7 118.3,108.6 121.7,109.9 C125.1,111.2 139.3,116.4 143.2,118.6 C147.1,120.8 165.3,133.7 168.7,136.0 C172.1,138.3 181.4,144.7 184.0,146.0 C186.6,147.3 197.7,151.2 200.0,152.0 C202.3,152.8 209.8,155.2 212.0,156.0 C214.2,156.8 224.7,160.5 227.0,162.0 C229.3,163.5 238.5,171.7 240.0,174.0 C241.5,176.3 244.3,186.1 245.0,190.0 C245.7,193.9 247.7,217.1 248.0,221.0 C248.3,224.9 248.8,235.6 249.0,237.0 C249.2,238.4 249.9,237.5 251.0,238.4 C252.1,239.3 261.2,245.5 262.0,247.5 C262.8,249.5 260.9,259.9 260.0,262.0 C259.1,264.1 252.9,272.2 251.0,273.0 C249.1,273.8 239.4,272.4 236.8,271.0 C234.2,269.6 223.0,259.0 220.4,256.6 C217.8,254.2 210.5,245.0 206.0,242.0 C201.5,239.0 172.9,223.5 166.0,220.3 C159.1,217.1 127.3,200.2 122.6,204.0 C117.8,207.8 110.1,259.1 109.0,265.6 C107.9,272.1 109.8,280.3 109.0,282.0 C108.2,283.7 100.6,286.1 99.0,285.6 C97.4,285.1 90.8,280.7 90.0,276.5 C89.2,272.3 90.0,243.1 90.0,234.8 C90.0,226.5 90.8,181.3 89.4,176.4 C88.0,171.5 75.3,175.6 73.3,175.7 C71.3,175.8 68.1,176.3 65.2,177.7 C62.3,179.1 42.6,190.1 38.3,192.5 C34.0,194.9 17.1,204.2 14.0,206.0 C10.9,207.8 2.3,213.1 0.7,214.0 C-0.9,214.9 -4.5,224.4 -5.0,217.0 C-5.5,209.6 -5.5,132.8 -5.0,125.0 Z" fill="#00ffff"/>
<path d="M195.0,177.5 C199.5,182.2 213.0,196.1 222.0,206.0 C231.0,215.9 244.5,231.8 249.0,237.0" fill="none"/>
<path d="M100.0,177.0 C102.0,179.2 108.2,185.6 112.0,190.0 C115.8,194.4 121.2,201.1 123.0,203.3" fill="none"/>
<path d="M142.3,86.9 C142.1,86.2 146.8,85.6 149.4,83.7 C152.0,81.8 163.1,73.2 164.2,70.5 C165.3,67.8 158.8,63.7 158.7,60.3 C158.6,56.9 160.3,45.2 163.4,41.6 C166.5,38.0 179.8,31.2 185.3,29.8 C190.8,28.4 203.9,28.2 210.3,29.8 C216.7,31.4 233.8,39.6 240.0,43.9 C246.2,48.2 260.7,62.1 263.4,66.6 C266.1,71.1 265.4,78.7 263.4,82.2 C261.4,85.7 250.0,93.9 246.2,96.2 C242.4,98.5 233.5,101.2 230.6,101.7 C227.7,102.2 224.5,101.9 221.2,100.9 C217.9,99.9 207.6,95.1 202.5,93.1 C197.4,91.1 181.2,84.2 177.5,83.7 C173.8,83.2 173.2,87.4 171.2,88.4 C169.2,89.4 162.7,92.1 160.3,92.3 C157.9,92.5 153.0,90.6 150.9,90.0 C148.8,89.4 142.5,87.6 142.3,86.9 Z" fill="#ffffff"/>
<g fill="none" stroke-width="3.2" stroke-linecap="square" stroke-linejoin="miter">
<path d="M179.1,45.5 L176.3,68"/>
<path d="M179.1,45.5 C180.9,45.5 187.5,44.9 189.7,45.8 C191.9,46.7 192.6,48.9 192.5,51.1 C192.4,53.3 190.4,57.1 189.0,58.8 C187.6,60.4 185.5,60.9 184.0,61.0 C182.5,61.1 180.5,59.8 179.8,59.5"/>
<path d="M201.0,37.0 C201.2,38.2 202.6,40.8 202.3,44.0 C202.1,47.2 200.4,52.0 199.5,56.0 C198.6,60.0 197.2,66.0 196.7,68.0"/>
<path d="M198.0,63.0 C199.4,61.8 204.9,56.8 206.6,56.0 C208.3,55.2 208.3,55.9 208.3,58.1 C208.3,60.3 207.1,66.4 206.6,69.4 C206.1,72.5 205.4,75.2 205.2,76.4"/>
<path d="M214.3,66.6 C216.3,66.6 224.2,67.5 226.3,66.6 C228.4,65.7 227.7,62.2 227.0,61.0 C226.3,59.8 223.9,59.2 222.0,59.5 C220.1,59.8 217.1,61.4 215.7,63.0 C214.3,64.7 213.5,66.8 213.6,69.4 C213.7,72.0 215.2,76.5 216.4,78.5 C217.6,80.5 218.9,81.2 220.6,81.7 C222.2,82.2 225.4,81.4 226.3,81.3"/>
<path d="M234.7,65.9 L235.4,83.4 L242.4,72.2 L243.8,83.4 L250.9,71.5"/>
</g>
</g></svg>
<rect x="1071" y="843" width="209" height="157" fill="#d0d0d0" />
<rect x="1073" y="843" width="204" height="1.5" fill="#7a7a7a" />
<rect x="1073" y="844.5" width="204" height="1" fill="#f0f0f0" />
<text x="1084" y="863.5" font-family="Liberation Sans" font-size="11.5" fill="#111" textLength="63.7" lengthAdjust="spacingAndGlyphs" font-weight="bold" >DiscoUSB</text>
<g shape-rendering="auto"><rect x="1193" y="854.2" width="65" height="17.5" rx="8.8" ry="8.8" fill="none" stroke="#6a6a6a" stroke-width="1.3"/><rect x="1192.5" y="853.5" width="65" height="17.5" rx="8.8" ry="8.8" fill="#d0d0d0" stroke="#f6f6f6" stroke-width="1.1"/></g>
<text x="1202.5" y="865.8" font-family="Liberation Sans" font-size="12" fill="#111" textLength="46.8" lengthAdjust="spacingAndGlyphs" >umount</text>
<text x="1084" y="888.5" font-family="Liberation Sans" font-size="11.5" fill="#111" textLength="48.5" lengthAdjust="spacingAndGlyphs" font-weight="bold" >Backup</text>
<g shape-rendering="auto"><rect x="1193" y="879.2" width="56.7" height="17.5" rx="8.8" ry="8.8" fill="none" stroke="#6a6a6a" stroke-width="1.3"/><rect x="1192.5" y="878.5" width="56.7" height="17.5" rx="8.8" ry="8.8" fill="#d0d0d0" stroke="#f6f6f6" stroke-width="1.1"/></g>
<text x="1202.5" y="890.8" font-family="Liberation Sans" font-size="12" fill="#111" textLength="38.5" lengthAdjust="spacingAndGlyphs" >mount</text>
<text x="1084" y="913.5" font-family="Liberation Sans" font-size="11.5" fill="#111" textLength="34.8" lengthAdjust="spacingAndGlyphs" font-weight="bold" >Sda2:</text>
<g shape-rendering="auto"><rect x="1193" y="904.2" width="56.7" height="17.5" rx="8.8" ry="8.8" fill="none" stroke="#6a6a6a" stroke-width="1.3"/><rect x="1192.5" y="903.5" width="56.7" height="17.5" rx="8.8" ry="8.8" fill="#d0d0d0" stroke="#f6f6f6" stroke-width="1.1"/></g>
<text x="1202.5" y="915.8" font-family="Liberation Sans" font-size="12" fill="#111" textLength="38.5" lengthAdjust="spacingAndGlyphs" >mount</text>
<text x="1084" y="938.5" font-family="Liberation Sans" font-size="11.5" fill="#111" textLength="36" lengthAdjust="spacingAndGlyphs" font-weight="bold" >Sdb1:</text>
<g shape-rendering="auto"><rect x="1193" y="929.2" width="56.7" height="17.5" rx="8.8" ry="8.8" fill="none" stroke="#6a6a6a" stroke-width="1.3"/><rect x="1192.5" y="928.5" width="56.7" height="17.5" rx="8.8" ry="8.8" fill="#d0d0d0" stroke="#f6f6f6" stroke-width="1.1"/></g>
<text x="1202.5" y="940.8" font-family="Liberation Sans" font-size="12" fill="#111" textLength="38.5" lengthAdjust="spacingAndGlyphs" >mount</text>
<text x="1084" y="963.5" font-family="Liberation Sans" font-size="11.5" fill="#111" textLength="64" lengthAdjust="spacingAndGlyphs" font-weight="bold" >Windows:</text>
<g shape-rendering="auto"><rect x="1193" y="954.2" width="56.7" height="17.5" rx="8.8" ry="8.8" fill="none" stroke="#6a6a6a" stroke-width="1.3"/><rect x="1192.5" y="953.5" width="56.7" height="17.5" rx="8.8" ry="8.8" fill="#d0d0d0" stroke="#f6f6f6" stroke-width="1.1"/></g>
<text x="1202.5" y="965.8" font-family="Liberation Sans" font-size="12" fill="#111" textLength="38.5" lengthAdjust="spacingAndGlyphs" >mount</text>
<text x="1083.5" y="995" font-family="Liberation Sans" font-size="12" fill="#111" textLength="151" lengthAdjust="spacingAndGlyphs" >/mnt/sda1 vfat mounted</text>
<rect x="1222" y="24" width="58" height="57" fill="#c8c8c8" />
<rect x="1224" y="25" width="54" height="54" fill="#000" />
<rect x="1228" y="28" width="46" height="30" fill="#f00000" />
<rect x="1228" y="35" width="46" height="16" fill="#f8f800" />
<g shape-rendering="auto"><path d="M1237,41 h10 v6 q0,4 -5,4 q-5,0 -5,-4 z" fill="#c8401c"/><rect x="1242" y="42" width="4" height="4" fill="#7080d0"/><path d="M1237,40 q5,-5 10,0 z" fill="#d04020"/><circle cx="1242" cy="36.5" r="1.4" fill="#d08020"/><rect x="1234.5" y="40" width="2" height="11" fill="#b0a080"/><rect x="1247.5" y="40" width="2" height="11" fill="#b0a080"/><rect x="1234" y="50" width="3" height="1.5" fill="#c04020"/><rect x="1247" y="50" width="3" height="1.5" fill="#c04020"/></g>
<rect x="1227" y="61" width="47" height="18" fill="#b8b8b8" />
<rect x="1228" y="62" width="45" height="17" fill="#000" />
<text x="1243.8" y="73.8" font-family="Liberation Mono" font-size="12" fill="#f0f000" textLength="11.8" lengthAdjust="spacingAndGlyphs" >es</text>
</svg>
</body></html>
